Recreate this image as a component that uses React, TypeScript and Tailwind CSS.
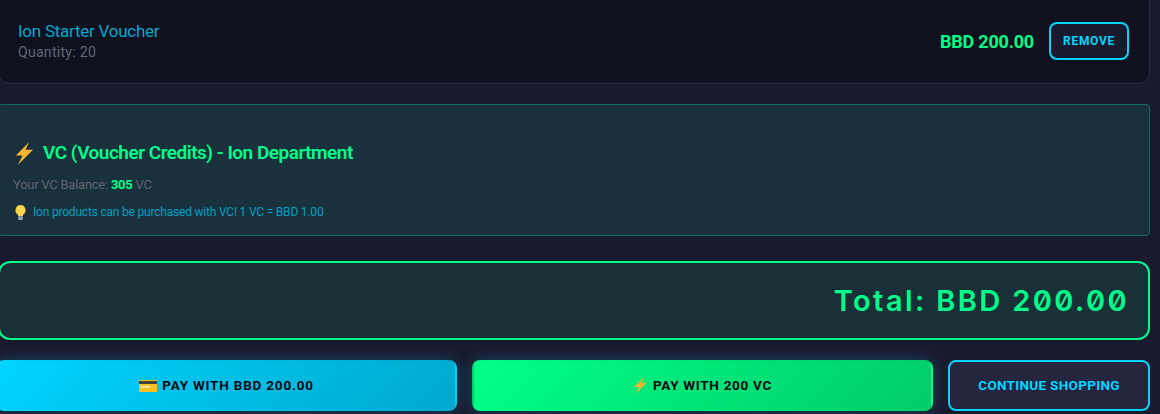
const sans = "font-['Roboto',sans-serif]";

function Bolt({ className }: { className: string }) {
  return (
    <svg viewBox="0 0 20 24" className={`shrink-0 ${className}`}>
      <path d="M15 0 1 14h7l-5 10L19 8h-8z" fill="#f9b62e" />
    </svg>
  );
}

function Bulb() {
  return (
    <svg viewBox="0 0 14 16" className="h-[15px] w-[13px] shrink-0">
      <path d="M7 0a5.500 5.500 0 0 0-3.500 9.700c.7.6 1 1.300 1 2.300h5c0-1 .3-1.700 1-2.300A5.500 5.500 0 0 0 7 0z" fill="#fcd34d" />
      <rect x="4.500" y="12" width="5" height="4" rx="1" fill="#8aa5b0" />
    </svg>
  );
}

function Card() {
  return (
    <svg viewBox="0 0 18 12" className="h-[12px] w-[18px] shrink-0">
      <rect y="0" width="18" height="12" fill="#fbbf24" />
      <rect y="1" width="18" height="3" fill="#44403c" />
      <rect x="2" y="6" width="9" height="1.500" fill="#fef3c7" />
    </svg>
  );
}

export default function App() {
  return (
    <div className={`h-[414px] w-[1160px] overflow-hidden bg-[#1a1a2e] ${sans}`}>
      <div className="-ml-[2px] flex w-[1152px] flex-col">
        <div className="-mt-[10px] flex h-[94px] items-center justify-between rounded-[12px] border border-[#2a2a44] bg-[#0f111e] pb-[2px] pl-[19px] pr-[20px] pt-[10px]">
          <div>
            <div className="text-[17px] leading-[22px] tracking-[-0.25px] text-[#00a8cc]">Ion Starter Voucher</div>
            <div className="text-[14px] leading-[20px] tracking-[0.3px] text-[#666672]">Quantity: 20</div>
          </div>
          <div className="flex items-center gap-[15px]">
            <span className="text-[18px] font-bold tracking-[-0.2px] text-[#00ff88]">BBD 200.00</span>
            <button className="h-[38px] w-[80px] rounded-[8px] border-2 border-[#00d4ff] bg-[#1a1a2e] text-[12px] font-bold tracking-[0.7px] text-[#00d4ff]">
              REMOVE
            </button>
          </div>
        </div>

        <div className="mt-[20px] h-[132px] rounded-[4px] border border-[#0f6b57] bg-[#18313c] pl-[14px] pt-[36px]">
          <div className="flex items-center gap-[9px] pl-[2px] text-[19px] font-semibold leading-[24px] tracking-[-0.5px] text-[#00ff88]">
            <Bolt className="h-[23px] w-[19px]" />
            <span>VC (Voucher Credits) - Ion Department</span>
          </div>
          <div className="mt-[12px] text-[13px] leading-[16px] tracking-[-0.25px] text-[#62666f]">
            Your VC Balance: <span className="font-bold text-[#00ff88]">305</span> VC
          </div>
          <div className="mt-[11px] flex items-center gap-[6px] pl-[1px] text-[12px] leading-[16px] tracking-[-0.2px] text-[#00a0c4]">
            <Bulb />
            <span>Ion products can be purchased with VC! 1 VC = BBD 1.00</span>
          </div>
        </div>

        <div className="mt-[25px] flex h-[79px] items-center justify-end rounded-[12px] border-2 border-[#00ff88] bg-[#1a3038] pr-[19px]">
          <span className="font-['Inter',sans-serif] text-[29px] font-semibold tracking-[2.4px] text-[#00ff88] slashed-zero">
            Total: BBD 200.00
          </span>
        </div>

        <div className="-ml-[2px] mt-[20px] flex gap-[15px]">
          <button className="flex h-[51px] w-[461px] items-center justify-center gap-[5px] rounded-[8px] border-2 border-transparent bg-[linear-gradient(135deg,#00d4ff,#00a8cc)] text-[13.5px] font-bold tracking-[0.8px] text-[#0a0a14] shadow-[0_0_16px_rgba(0,212,255,0.25)]">
            <Card />
            PAY WITH BBD 200.00
          </button>
          <button className="flex h-[51px] w-[461px] items-center justify-center gap-[5px] rounded-[8px] border-2 border-transparent bg-[linear-gradient(135deg,#00ff88,#00cc6a)] text-[13.5px] font-bold tracking-[0.7px] text-[#0a0a14] shadow-[0_0_16px_rgba(0,212,255,0.25)]">
            <Bolt className="h-[17px] w-[15px]" />
            PAY WITH 200 VC
          </button>
          <button className="h-[51px] w-[202px] rounded-[8px] border-2 border-[#00d4ff] bg-[#25253f] text-[13.5px] font-bold tracking-[0.3px] text-[#00d4ff]">
            CONTINUE SHOPPING
          </button>
        </div>
      </div>
    </div>
  );
}
